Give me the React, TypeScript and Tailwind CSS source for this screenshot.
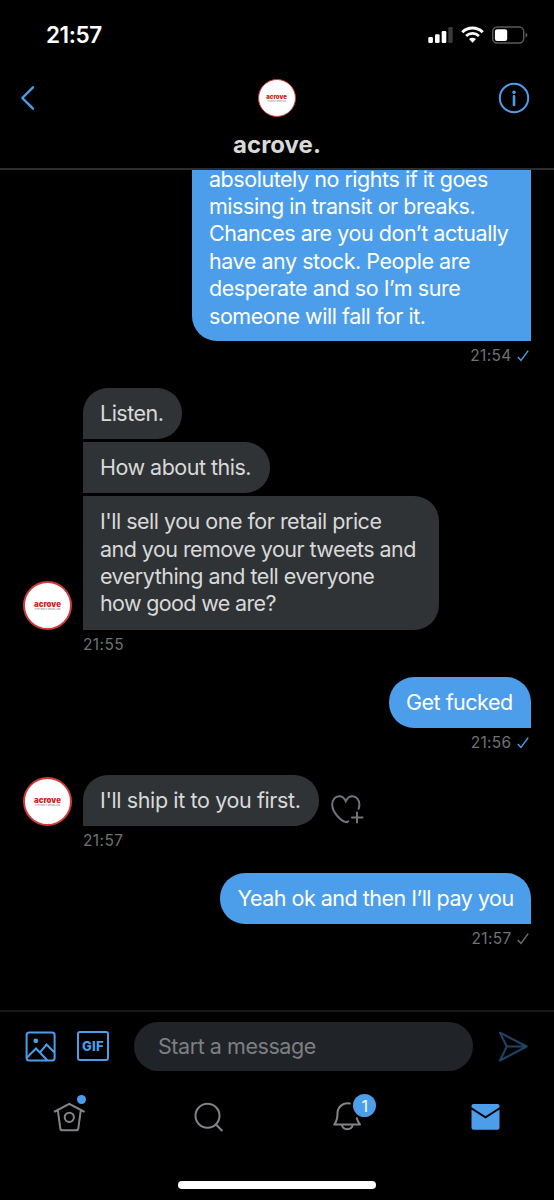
import type { ReactNode } from 'react';

type AvatarProps = { small?: boolean };

function Avatar({ small }: AvatarProps) {
  const size = small
    ? 'size-[38px] border-[1.5px]'
    : 'size-[49px] border-2';
  return (
    <div className={`flex shrink-0 flex-col items-center justify-center rounded-full border-[#cf3a36] bg-white tracking-normal ${size}`}>
      <span className={`font-black text-[#cc2420] ${small ? 'text-[6px] leading-[6px]' : 'mt-px text-[7.8px] leading-[7.5px]'}`}>
        acrove
      </span>
      <span className={`whitespace-nowrap text-[#777] ${small ? 'text-[1.9px] leading-[2px]' : 'text-[2.6px] leading-[2.5px]'}`}>
        THE BEST RESELLER
      </span>
    </div>
  );
}

function StatusBar() {
  return (
    <div className="flex h-[70px] items-center justify-between pl-[46px] pr-[26px]">
      <span className="pt-px text-[22.5px] font-semibold leading-none tracking-[-0.4px] text-white">21:57</span>
      <div className="flex items-center">
        <svg width="25" height="18" viewBox="0 0 25 18" fill="#fff">
          <rect x="0.3" y="11" width="4.6" height="6" rx="1.2" />
          <rect x="7" y="8.3" width="4.6" height="8.7" rx="1.2" />
          <rect x="13.7" y="5" width="4.6" height="12" rx="1.2" />
          <rect x="20.3" y="1" width="4.4" height="16" rx="1.2" fill="#3a3a3a" />
        </svg>
        <svg className="ml-2" width="23" height="18" viewBox="0 0 23 18" fill="none" stroke="#fff">
          <path d="M1.3 6.2a14.6 14.6 0 0 1 20.4 0" strokeWidth="3" />
          <path d="M5.1 10a9.2 9.2 0 0 1 12.8 0" strokeWidth="2.8" />
          <path d="M8 13.1a5 5 0 0 1 7 0l-3.5 3.7z" fill="#fff" stroke="none" />
        </svg>
        <svg className="ml-[7px]" width="37" height="18" viewBox="0 0 37 18">
          <rect x="1.7" y="1" width="31" height="16" rx="4.5" fill="none" stroke="#5b5b5b" strokeWidth="1.4" />
          <rect x="3.9" y="3.2" width="12.3" height="11.8" rx="2.2" fill="#fff" />
          <path d="M34.5 6.5c2.4.8 2.4 4.2 0 5z" fill="#5b5b5b" />
        </svg>
      </div>
    </div>
  );
}

function Header() {
  return (
    <header className="h-[170px] shrink-0 border-b-2 border-[#2b2c2e]">
      <StatusBar />
      <div className="flex h-14 items-center justify-between pl-[20px] pr-[24px]">
        <svg width="35" height="26" viewBox="0 0 35 26" fill="none" stroke="#4c9eeb" strokeWidth="2.4" strokeLinecap="round" strokeLinejoin="round">
          <path d="M13 2.3 2.3 13 13 23.7" />
        </svg>
        <Avatar small />
        <svg width="32" height="32" viewBox="0 0 32 32" fill="none" stroke="#4c9eeb">
          <circle cx="16" cy="16" r="14.2" strokeWidth="2" />
          <path d="M16 14.4v8.6" strokeWidth="2.6" strokeLinecap="round" />
          <circle cx="16" cy="10.2" r="1.7" fill="#4c9eeb" stroke="none" />
        </svg>
      </div>
      <h1 className="mt-[4px] text-center text-[24px] font-bold leading-[30px] text-[#d9d9d9]">acrove.</h1>
    </header>
  );
}

type BubbleProps = { className: string; children: ReactNode };

function Incoming({ className, children }: BubbleProps) {
  return (
    <div className={`shrink-0 whitespace-nowrap bg-[#2f3336] py-[11.8px] pl-[17px] text-[#d9d9d9] ${className}`}>
      {children}
    </div>
  );
}

function Outgoing({ className, children }: BubbleProps) {
  return (
    <div className={`shrink-0 self-end whitespace-nowrap rounded-l-[25px] bg-[#4c9eeb] text-white ${className}`}>
      {children}
    </div>
  );
}

function SentTime({ time, pending }: { time: string; pending?: boolean }) {
  return (
    <div className="flex h-[47px] shrink-0 items-start justify-end gap-[5.5px] pr-[2px] pt-[5px] text-[15.5px] leading-[20px] tracking-[0.3px] text-[#6e7275]">
      {time}
      <svg className="mt-1" width="12" height="13" viewBox="0 0 12 13" fill="none" stroke={pending ? '#6e7275' : '#4c9eeb'} strokeWidth="1.4">
        <path d="M.8 7 4 10.500 11.200.7" />
      </svg>
    </div>
  );
}

function ReceivedTime({ time }: { time: string }) {
  return (
    <div className="h-[47.4px] shrink-0 pl-[60px] pt-[5px] text-[15.5px] leading-[20px] tracking-[0.4px] text-[#6e7275]">{time}</div>
  );
}

function Messages() {
  return (
    <main className="flex h-[840px] shrink-0 flex-col overflow-hidden px-[23px] text-[21.5px] leading-[27.4px] tracking-[-0.5px]">
      {/* Long message scrolled partly under the header */}
      <Outgoing className="h-[171px] w-[339px] rounded-tl-none pl-[17px]">
        <p className="-mt-[4.4px] tracking-[-0.46px]">
          absolutely no rights if it goes<br />
          missing in transit or breaks.<br />
          Chances are you don’t actually<br />
          have any stock. People are<br />
          desperate and so I’m sure<br />
          someone will fall for it.
        </p>
      </Outgoing>
      <SentTime time="21:54" />

      <div className="flex shrink-0 items-end gap-[11px]">
        <Avatar />
        <div className="flex flex-col items-start gap-[3.2px]">
          <Incoming className="w-[99px] rounded-[25px] rounded-bl-none">Listen.</Incoming>
          <Incoming className="w-[187px] rounded-r-[25px]">How about this.</Incoming>
          <Incoming className="w-[356px] rounded-r-[25px]">
            I'll sell you one for retail price<br />
            <span className="tracking-[-0.55px]">and you remove your tweets and</span><br />
            everything and tell everyone<br />
            <span className="tracking-[-0.65px]">how good we are?</span>
          </Incoming>
        </div>
      </div>
      <ReceivedTime time="21:55" />

      <Outgoing className="w-[142px] rounded-tr-[25px] py-[11.8px] pl-[17px]">Get fucked</Outgoing>
      <SentTime time="21:56" />

      <div className="flex shrink-0 items-end">
        <Avatar />
        <Incoming className="ml-[11px] w-[236px] rounded-[25px] rounded-bl-none tracking-[-0.38px]">I'll ship it to you first.</Incoming>
        <svg className="mb-[2px] ml-[12px]" width="34" height="30" viewBox="0 0 34 30" fill="none" stroke="#6e767d" strokeWidth="2" strokeLinecap="round">
          <path d="M17.200 27.300c-.8.500-1.600.7-2.400.7C11.500 27.600 1.200 19.500 1.200 10.600 1.200 5.800 4.200 2.200 8.200 2.200c3 0 5.300 1.900 6.600 5 1.300-3.100 3.600-5 6.600-5 4 0 7 3.600 7 8.400 0 1.500-.3 2.900-.8 4.200" />
          <path d="M26 18.500v10M21 23.500h10.500" />
        </svg>
      </div>
      <ReceivedTime time="21:57" />

      <Outgoing className="w-[311px] rounded-tr-[25px] py-[11.8px] pl-[17.5px]">Yeah ok and then I’ll pay you</Outgoing>
      <SentTime time="21:57" pending />
    </main>
  );
}

function Composer() {
  return (
    <div className="flex h-[72px] shrink-0 items-center border-t-2 border-[#17181a] px-[25px] pb-[2px]">
      <svg width="31" height="31" viewBox="0 0 31 31" fill="none" stroke="#4c9eeb" strokeWidth="2">
        <rect x="1.600" y="1.500" width="28" height="28" rx="2.500" />
        <circle cx="10.800" cy="9.800" r="2.400" fill="#4c9eeb" stroke="none" />
        <path d="M2 26.500 11 17.500 22.500 29.500M15.500 20.800 21.500 13.500 29.500 21.500" />
      </svg>
      <div className="ml-[21px] flex h-[30px] w-8 items-center justify-center rounded-[3px] border-2 border-[#4c9eeb] text-[13px] font-extrabold leading-none tracking-[0.3px] text-[#4c9eeb]">
        GIF
      </div>
      <div className="ml-[25px] flex h-[49px] w-[339px] items-center rounded-full bg-[#202327] pl-6 text-[21.5px] tracking-[-0.45px] text-[#7d8083]">
        Start a message
      </div>
      <svg className="ml-[25px]" width="31" height="31" viewBox="0 0 31 31" fill="none" stroke="#1d4468" strokeWidth="2" strokeLinejoin="round">
        <path d="M2 1.700 28.700 15.500 2 29.500 8.800 15.500zM8.800 15.500h19" />
      </svg>
    </div>
  );
}

function TabBar() {
  return (
    <nav className="grid h-[70px] shrink-0 grid-cols-4 place-items-center text-[#828488]">
      <div className="relative">
        <svg width="32" height="30" viewBox="0 0 32 30" fill="none" stroke="currentColor" strokeWidth="2" strokeLinecap="round" strokeLinejoin="round">
          <path d="M1.800 9.500 16.300 1.800 30.800 9.500M4.800 8.200 7.300 26.300q.2 2 2.200 2h13.600q2 0 2.200-2L27.800 8.200" />
          <circle cx="16.300" cy="15.300" r="4.600" />
        </svg>
        <span className="absolute -right-px -top-[7px] size-[9px] rounded-full bg-[#4c9eeb]" />
      </div>
      <svg width="30" height="30" viewBox="0 0 30 30" fill="none" stroke="currentColor" strokeWidth="2" strokeLinecap="round">
        <circle cx="14.500" cy="13.800" r="12" />
        <path d="m23 22.500 5.800 6" />
      </svg>
      <div className="relative">
        <svg width="30" height="30" viewBox="0 0 30 30" fill="none" stroke="currentColor" strokeWidth="2" strokeLinecap="round" strokeLinejoin="round">
          <path d="M18.800 1.500C11.800.5 6.500 4.800 6.500 11.500 6.500 17 4.800 20.500 3.300 22.600h25.700c-1.600-2.200-2.600-4-3.200-6.300M10.800 22.600a5.600 5.600 0 0 0 11 0" />
        </svg>
        <span className="absolute -right-[15px] -top-[8px] flex size-[23px] items-center justify-center rounded-full bg-[#4c9eeb] text-[16px] leading-none text-white">
          1
        </span>
      </div>
      <svg width="30" height="28" viewBox="0 0 30 28" fill="#4c9eeb">
        <path d="M3.500.9h24q2 0 2 2v1.400L15.500 13.200 1.500 4.300V2.900q0-2 2-2z" />
        <path d="M1.500 6.500 15.500 15.500 29.500 6.500v18q0 2.200-2 2.200h-24q-2 0-2-2.200z" />
      </svg>
    </nav>
  );
}

export default function App() {
  return (
    <div className="flex h-[1200px] w-[554px] flex-col overflow-hidden bg-black font-['Inter',sans-serif]">
      <Header />
      <Messages />
      <Composer />
      <TabBar />
      <div className="mx-auto mt-[29px] h-2 w-[198px] rounded-full bg-white" />
    </div>
  );
}
